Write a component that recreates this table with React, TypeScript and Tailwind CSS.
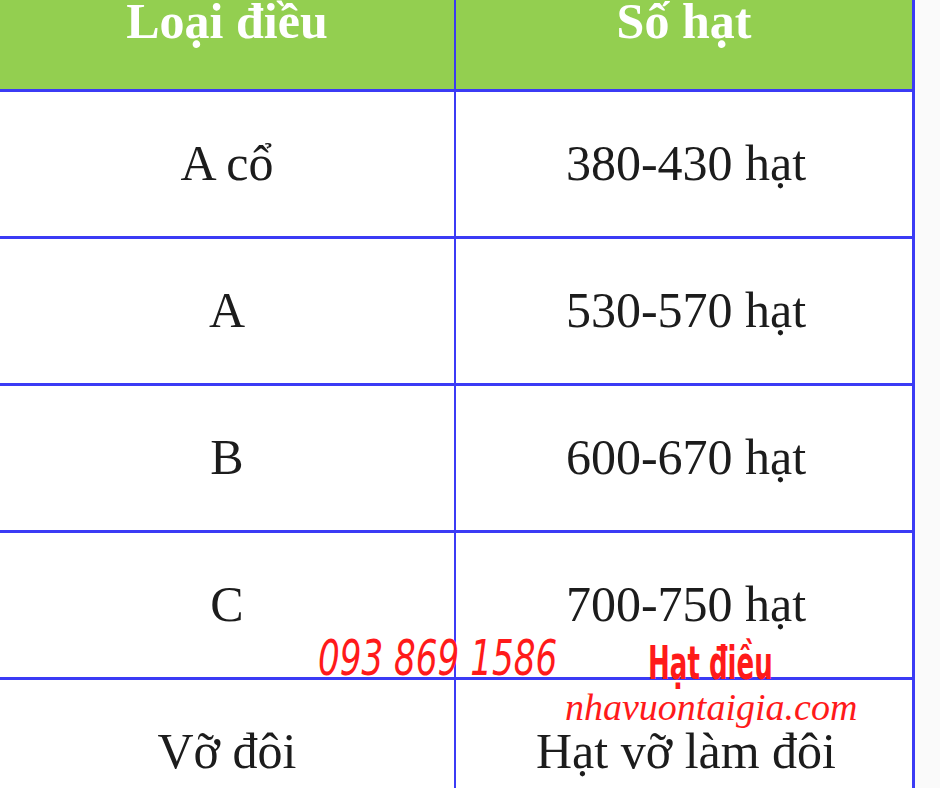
import React from 'react';

const rows = [
  { type: 'A cổ', count: '380-430 hạt' },
  { type: 'A', count: '530-570 hạt' },
  { type: 'B', count: '600-670 hạt' },
  { type: 'C', count: '700-750 hạt' },
  { type: 'Vỡ đôi', count: 'Hạt vỡ làm đôi' },
];

export default function App() {
  return (
    <div className="relative w-[940px] h-[788px] overflow-hidden bg-[#fafafa]">
      <div
        className="w-[915px] border-r-[3px] border-[#3b3bf5] bg-white text-[#1c1c1c]"
        style={{ fontFamily: '"Liberation Serif", "Times New Roman", serif' }}
      >
        <div className="grid grid-cols-[456px_456px] h-[92px] bg-[#93cf50] border-b-[3px] border-[#3b3bf5]">
          <div className="border-r-2 border-[#3b3bf5] flex justify-center">
            <span className="text-[50px] leading-[50px] font-bold text-white mt-[-4px]">Loại điều</span>
          </div>
          <div className="flex justify-center">
            <span className="text-[50px] leading-[50px] font-bold text-white mt-[-4px]">Số hạt</span>
          </div>
        </div>
        {rows.map((r) => (
          <div key={r.type} className="grid grid-cols-[456px_456px] h-[147px] border-b-[3px] border-[#3b3bf5]">
            <div className="border-r-2 border-[#3b3bf5] flex items-center justify-center text-[50px] pb-[2px]">
              {r.type}
            </div>
            <div className="flex items-center justify-center text-[50px] pb-[2px] pl-[4px]">
              {r.count}
            </div>
          </div>
        ))}
      </div>

      <div className="absolute left-[318px] top-[633px] text-[#ff1a1a] text-[50px] italic leading-none whitespace-nowrap origin-left scale-x-[0.76]"
        style={{ fontFamily: '"DejaVu Sans Condensed", "DejaVu Sans", sans-serif' }}>
        093 869 1586
      </div>
      <div className="absolute left-[648px] top-[640px] text-[#ff1a1a] text-[46px] font-bold leading-none whitespace-nowrap origin-left scale-x-[0.63]"
        style={{ fontFamily: '"DejaVu Sans Condensed", "DejaVu Sans", sans-serif' }}>
        Hạt điều
      </div>
      <div className="absolute left-[565px] top-[688px] text-[#ff1a1a] text-[38px] italic leading-none whitespace-nowrap"
        style={{ fontFamily: '"Liberation Serif", "Times New Roman", serif' }}>
        nhavuontaigia.com
      </div>
    </div>
  );
}
